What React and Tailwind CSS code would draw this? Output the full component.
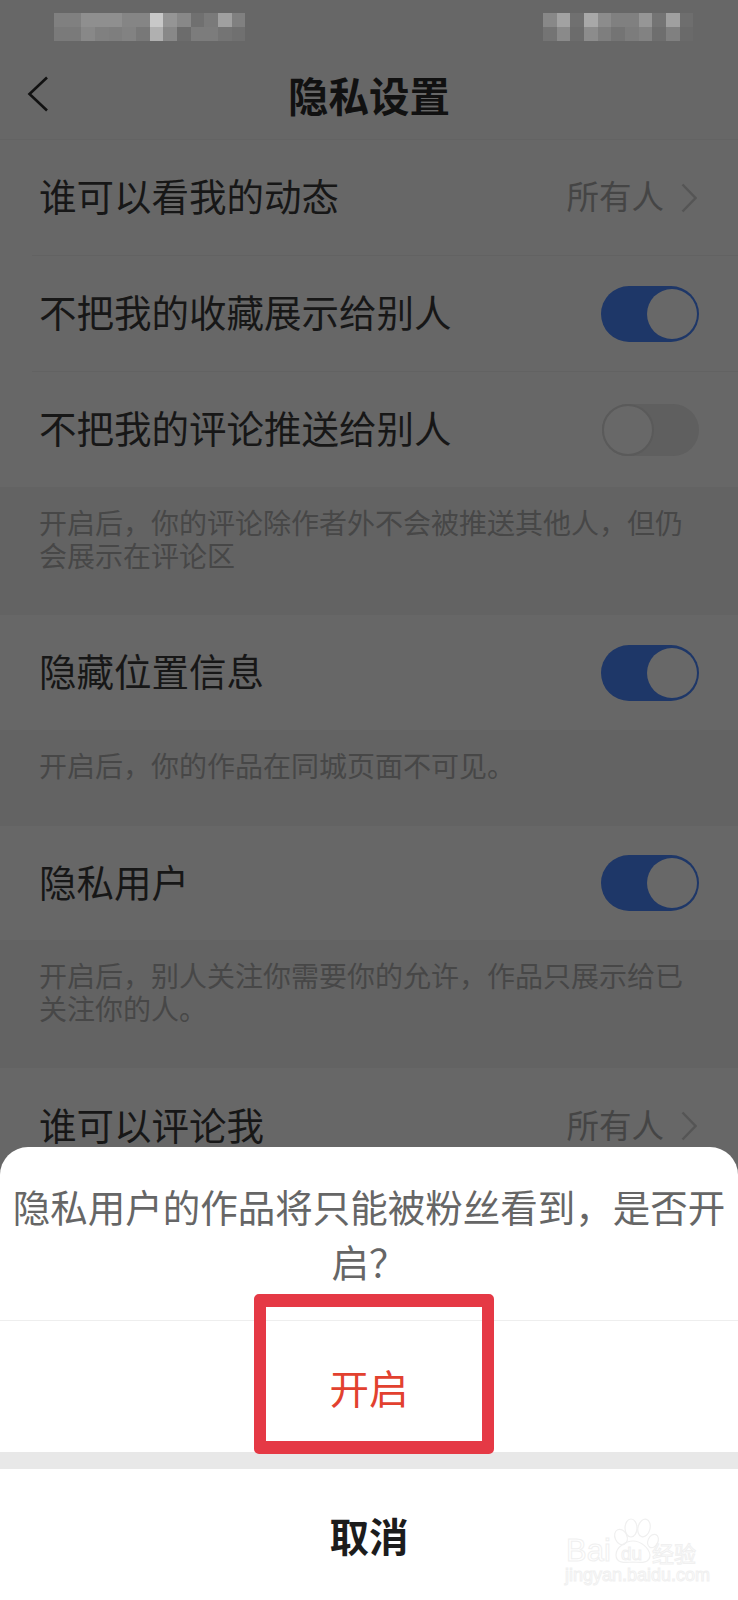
const leftTop = ["#808080", "#808080", "#8f8f8f", "#8f8f8f", "#8f8f8f", "#858585", "#858585", "#c8c8c8", "#959595", "#888888", "#707070", "#7a7a7a", "#a0a0a0", "#808080"];
const leftBottom = ["#7a7a7a", "#7a7a7a", "#888888", "#808080", "#7e7e7e", "#828282", "#787878", "#b0b0b0", "#888888", "#6c6c6c", "#7c7c7c", "#7c7c7c", "#747474", "#707070"];
const rightTop = ["#888888", "#a2a2a2", "#707070", "#a8a8a8", "#8c8c8c", "#808080", "#808080", "#969696", "#747474", "#a0a0a0", "#6e6e6e"];
const rightBottom = ["#747474", "#8a8a8a", "#6c6c6c", "#8c8c8c", "#7e7e7e", "#747474", "#7c7c7c", "#828282", "#6e6e6e", "#808080", "#6a6a6a"];

function Mosaic({ top, bottom, className }) {
  return (
    <div className={className}>
      {[top, bottom].map((row, i) => (
        <div key={i} className="flex h-[14px]">
          {row.map((color, j) => (
            <div key={j} className="w-[13.67px] h-full" style={{ backgroundColor: color }} />
          ))}
        </div>
      ))}
    </div>
  );
}

function Toggle({ on }) {
  if (on) {
    return (
      <div className="w-[98px] h-[56px] rounded-full bg-[#1e3768] flex items-center justify-end pr-[2px]">
        <div className="w-[50px] h-[50px] rounded-full bg-[#686868]" />
      </div>
    );
  }
  return (
    <div className="w-[97px] h-[52px] rounded-full bg-[#5f5f5f]">
      <div className="w-[52px] h-[52px] rounded-full bg-[#686868] border-2 border-[#5a5a5a]" />
    </div>
  );
}

function Chevron() {
  return (
    <svg width="16" height="30" viewBox="0 0 16 30" fill="none" className="mr-[2px]">
      <path d="M1.5 1.5 L14.5 15 L1.5 28.5" stroke="#555555" strokeWidth="2.4" />
    </svg>
  );
}

function Row({ label, h, children }) {
  return (
    <div className={`flex items-center justify-between pl-[39px] pr-[39px] ${h}`}>
      <span className="text-[37.5px] leading-[50px] pb-[5px] text-[#171717]">{label}</span>
      {children}
    </div>
  );
}

function Value() {
  return (
    <div className="flex items-center gap-[17px]">
      <span className="text-[32.5px] leading-[44px] pb-[5px] text-[#454545]">所有人</span>
      <Chevron />
    </div>
  );
}

function Note({ children, h }) {
  return (
    <div className={`bg-[#636363] pl-[39px] pr-[40px] pt-[19px] text-[28px] leading-[33px] text-[#474747] ${h}`}>
      {children}
    </div>
  );
}

function Watermark() {
  return (
    <div className="absolute left-[564px] top-[370px] w-[140px] h-[70px] text-transparent [-webkit-text-stroke:1px_#f0f0f0]">
      <svg width="72" height="50" viewBox="0 0 72 50" fill="none" stroke="#f0f0f0" strokeWidth="1.2" className="absolute left-[30px] top-0">
        <ellipse cx="27" cy="20" rx="6" ry="8" transform="rotate(-25 27 20)" />
        <ellipse cx="37" cy="11" rx="6" ry="9" />
        <ellipse cx="50" cy="11" rx="6" ry="9" transform="rotate(15 50 11)" />
        <ellipse cx="59" cy="24" rx="5" ry="7" transform="rotate(25 59 24)" />
        <path d="M22 38 C22 30 32 24 39 24 C47 24 55 31 56 38 C56 46 48 46 39 45 C30 46 22 46 22 38 Z" />
      </svg>
      <span className="absolute left-[2px] top-[19px] text-[31px] leading-[30px] font-['Liberation_Sans',sans-serif]">Bai</span>
      <span className="absolute left-[57px] top-[26px] text-[19px] leading-[22px] font-['Liberation_Sans',sans-serif]">du</span>
      <span className="absolute left-[88px] top-[21px] text-[22px] leading-[28px]">经验</span>
      <span className="absolute left-[1px] top-[47px] text-[18px] leading-[22px] whitespace-nowrap font-['Liberation_Sans',sans-serif]">jingyan.baidu.com</span>
    </div>
  );
}

export default function App() {
  return (
    <div className="relative w-[738px] h-[1600px] overflow-hidden bg-[#676767] font-['Noto_Sans_CJK_SC','Noto_Sans',sans-serif]">
      <div className="h-[51px] relative">
        <Mosaic top={leftTop} bottom={leftBottom} className="absolute left-[54px] top-[13px]" />
        <Mosaic top={rightTop} bottom={rightBottom} className="absolute left-[543px] top-[13px]" />
      </div>

      <div className="relative h-[89px] flex items-center justify-center border-b border-[#636363]">
        <svg width="22" height="36" viewBox="0 0 22 36" fill="none" className="absolute left-[27px] top-[25px]">
          <path d="M20 1.5 L2.5 18 L20 34.5" stroke="#111111" strokeWidth="2.6" />
        </svg>
        <span className="text-[40.5px] leading-[50px] font-bold text-[#111111] -mt-[1px]">隐私设置</span>
      </div>

      <Row label="谁可以看我的动态" h="h-[115px]">
        <Value />
      </Row>
      <div className="ml-[32px] h-px bg-[#626262]" />
      <Row label="不把我的收藏展示给别人" h="h-[115px]">
        <Toggle on />
      </Row>
      <div className="ml-[32px] h-px bg-[#626262]" />
      <Row label="不把我的评论推送给别人" h="h-[115px]">
        <Toggle />
      </Row>

      <Note h="h-[128px]">开启后，你的评论除作者外不会被推送其他人，但仍会展示在评论区</Note>

      <Row label="隐藏位置信息" h="h-[115px]">
        <Toggle on />
      </Row>
      <Note h="h-[96px]">开启后，你的作品在同城页面不可见。</Note>

      <Row label="隐私用户" h="h-[114px]">
        <Toggle on />
      </Row>
      <Note h="h-[128px]">开启后，别人关注你需要你的允许，作品只展示给已关注你的人。</Note>

      <Row label="谁可以评论我" h="h-[116px]">
        <Value />
      </Row>

      <div className="absolute inset-x-0 bottom-0 h-[453px] bg-white rounded-t-[28px] flex flex-col">
        <div className="h-[174px] border-b border-[#eeeeee] px-[12px] pt-[31px] text-center text-[37.5px] leading-[55px] text-[#666666]">
          隐私用户的作品将只能被粉丝看到，是否开启？
        </div>
        <div className="h-[131px] flex items-center justify-center text-[39.5px] leading-[50px] text-[#e2412f]">开启</div>
        <div className="h-[17px] bg-[#e8e8e8]" />
        <div className="flex-1 flex items-center justify-center text-[39.5px] leading-[50px] font-bold text-[#1c1c1c]">取消</div>
        <Watermark />
      </div>

      <div className="absolute left-[254px] top-[1294px] w-[240px] h-[160px] rounded-[5px] border-x-[12px] border-y-[13px] border-[#e53945]" />
    </div>
  );
}
